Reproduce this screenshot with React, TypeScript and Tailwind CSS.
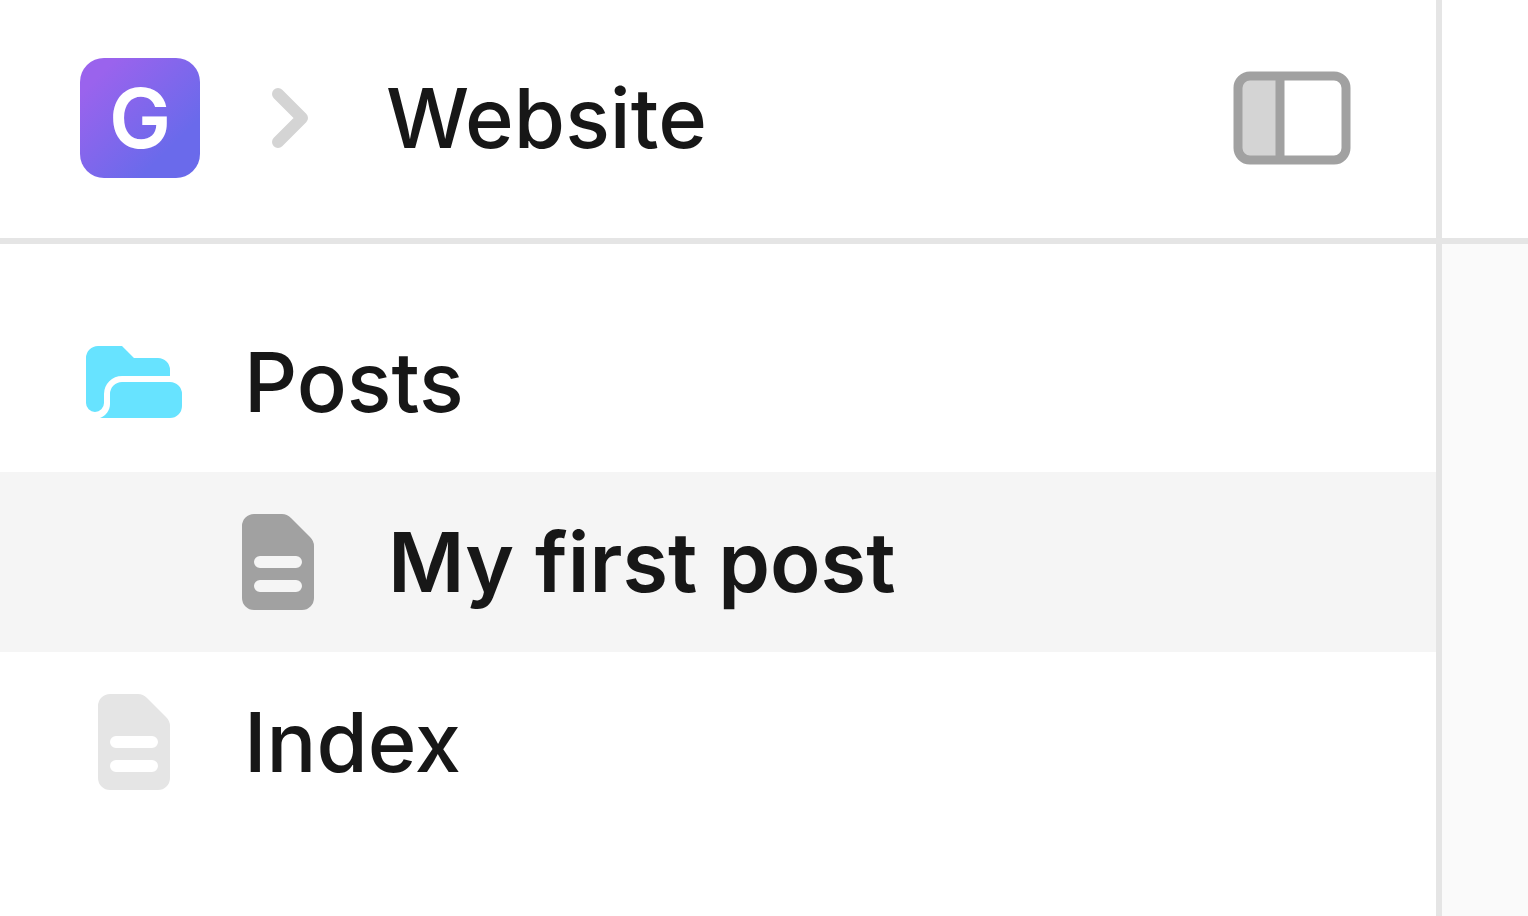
import { clsx } from 'clsx';

interface IconProps {
  className?: string;
}

const ChevronIcon = ({ className }: IconProps) => (
  <svg viewBox="0 0 36 60" fill="none" className={className} aria-hidden="true">
    <path
      d="M6 6L30 30L6 54"
      stroke="currentColor"
      strokeWidth="12"
      strokeLinecap="round"
      strokeLinejoin="round"
    />
  </svg>
);

const SidebarIcon = ({ className }: IconProps) => (
  <svg viewBox="0 0 120 96" fill="none" className={className} aria-hidden="true">
    <path d="M18 6H48V90H18A12 12 0 0 1 6 78V18A12 12 0 0 1 18 6Z" fill="#d4d4d4" />
    <rect x="6" y="6" width="108" height="84" rx="12" stroke="currentColor" strokeWidth="9" />
    <path d="M48 6V90" stroke="currentColor" strokeWidth="9" />
  </svg>
);

const FolderIcon = ({ className }: IconProps) => (
  <svg viewBox="0 0 96 72" fill="currentColor" className={className} aria-hidden="true">
    <path d="M12 0H36L48 12H72A12 12 0 0 1 84 24V30H36A18 18 0 0 0 18 48V57A9 9 0 0 1 0 57V12A12 12 0 0 1 12 0Z" />
    <path d="M36 36H84A12 12 0 0 1 96 48V60A12 12 0 0 1 84 72H14C20 70 24 64 24 58V48A12 12 0 0 1 36 36Z" />
  </svg>
);

const DocumentIcon = ({ className }: IconProps) => (
  <svg viewBox="0 0 72 96" fill="currentColor" className={className} aria-hidden="true">
    <path
      fillRule="evenodd"
      d="M12 0H40Q45 0 49 4L68 23Q72 27 72 32V84A12 12 0 0 1 60 96H12A12 12 0 0 1 0 84V12A12 12 0 0 1 12 0ZM18 42A6 6 0 0 0 18 54H54A6 6 0 0 0 54 42ZM18 66A6 6 0 0 0 18 78H54A6 6 0 0 0 54 66Z"
    />
  </svg>
);

interface TreeItemProps {
  label: string;
  icon: React.ReactNode;
  isNested?: boolean;
  isActive?: boolean;
}

const TreeItem = ({ label, icon, isNested = false, isActive = false }: TreeItemProps) => (
  <li>
    <a
      href="#"
      aria-current={isActive ? 'page' : undefined}
      className={clsx(
        'flex h-45 items-center gap-14',
        isNested ? 'pl-56' : 'pl-20',
        isActive && 'bg-neutral-100 font-semibold',
      )}
    >
      <span className="flex w-27 shrink-0 justify-center">{icon}</span>
      {label}
    </a>
  </li>
);

const App = () => {
  return (
    <div className="flex min-h-screen bg-white font-['Inter',sans-serif] text-[83px] leading-none font-medium text-neutral-900">
      <aside className="grow border-r-6 border-neutral-200">
        <header className="flex items-center border-b-6 border-neutral-200 pt-[58px] pr-21 pb-15 pl-20">
          <a
            href="#"
            className="flex size-30 items-center justify-center rounded-3xl bg-linear-to-br/srgb from-[#9a63ed] from-15% to-[#6a6aeb] to-75% font-semibold text-white"
          >
            G
          </a>
          <ChevronIcon className="mx-18 w-9 text-neutral-300" />
          <h1 className="ml-1.5 grow">Website</h1>
          <button type="button" aria-label="Toggle sidebar">
            <SidebarIcon className="w-30 text-neutral-400" />
          </button>
        </header>
        <nav className="pt-12">
          <ul>
            <TreeItem label="Posts" icon={<FolderIcon className="w-24 text-[#67e3ff]" />} />
            <TreeItem
              label="My first post"
              icon={<DocumentIcon className="w-18 text-neutral-400" />}
              isNested
              isActive
            />
            <TreeItem label="Index" icon={<DocumentIcon className="w-18 text-neutral-200" />} />
          </ul>
        </nav>
      </aside>
      <main className="flex w-[86px] shrink-0 flex-col">
        <div className="h-[244px] border-b-6 border-neutral-200" />
        <div className="grow bg-neutral-50" />
      </main>
    </div>
  );
};

export default App;
